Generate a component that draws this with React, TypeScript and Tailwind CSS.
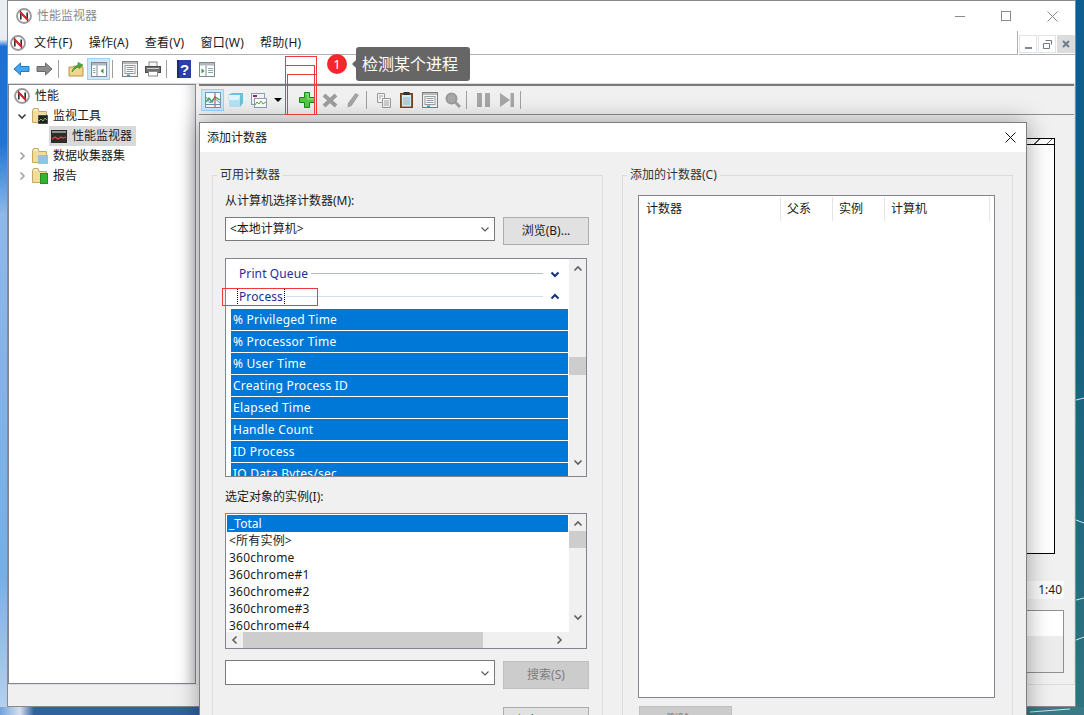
import type { ReactNode } from 'react';

const AppIcon = () => (
  <svg width="16" height="16" viewBox="0 0 16 16">
    <circle cx="8" cy="8" r="7" fill="#fff" stroke="#9a9a9a" strokeWidth="1.8" />
    <path d="M4.8 11.5V4.5L11.2 11.5V4.5" fill="none" stroke="#333" strokeWidth="1.7" />
    <path d="M4 4l8 8" stroke="#e0242c" strokeWidth="1.8" />
  </svg>
);

const Arrow = ({ dir, fill, stroke }: { dir: 'l' | 'r'; fill: string; stroke: string }) => (
  <svg width="17" height="14" viewBox="0 0 17 14">
    <path
      d={dir === 'l' ? 'M1 7l6.5-6v3.5H16v5H7.5V13z' : 'M16 7L9.5 1v3.5H1v5h8.5V13z'}
      fill={fill}
      stroke={stroke}
    />
  </svg>
);

const FolderUp = () => (
  <svg width="16" height="16" viewBox="0 0 16 16">
    <path d="M1 6h4l1-1h1l1 1h7v9H1z" fill="#efd68e" stroke="#b5954a" />
    <path d="M4 11c1-4 3-6 6-7V1.5L15 4l-4 3.5V5.8C8.500 6.500 6 8 4 11z" fill="#4fa83a" stroke="#2f7d22" strokeWidth=".6" />
  </svg>
);

const PaneIcon = ({ left }: { left?: boolean }) => (
  <svg width="16" height="15" viewBox="0 0 16 15">
    <rect x=".5" y=".5" width="15" height="14" fill="#fff" stroke="#7d8a96" />
    <rect x="1" y="1" width="14" height="2.500" fill="#aeb8c2" />
    <path d={left ? 'M6 3.500v11' : 'M7 3.500v11'} stroke="#7d8a96" />
    {left ? <path d="M12.500 6.500v5l-3-2.500z" fill="#2f9e3a" /> : <path d="M2.500 6.500v5l3-2.500z" fill="#2f9e3a" />}
    {left ? <path d="M2 6.500h2.500M2 8.500h2.500M2 10.500h2.500" stroke="#8aa" /> : <path d="M9 6.500h5M9 8.500h5M9 10.500h5" stroke="#8aa" />}
  </svg>
);

const PropsIcon = () => (
  <svg width="16" height="16" viewBox="0 0 16 16">
    <rect x=".5" y=".5" width="15" height="15" fill="#f4f4f4" stroke="#7f7f7f" />
    <rect x="1" y="1" width="14" height="2" fill="#b9b9b9" />
    <rect x="3" y="4.500" width="10" height="8" fill="#fff" stroke="#9a9a9a" />
    <path d="M4.500 6.500h7M4.500 8.500h7M4.500 10.500h7" stroke="#8b9aa8" />
    <rect x="5" y="13.500" width="3" height="1.500" fill="#2aa3dd" />
  </svg>
);

const PrintIcon = () => (
  <svg width="16" height="16" viewBox="0 0 16 16">
    <rect x="4" y="1" width="8" height="5" fill="#f6f6f6" stroke="#8a8a8a" />
    <rect x=".5" y="5.500" width="15" height="6" fill="#6f6f6f" stroke="#4a4a4a" />
    <rect x="2" y="7" width="12" height="1" fill="#d0d0d0" />
    <rect x="3.500" y="10.500" width="9" height="4.500" fill="#fff" stroke="#8a8a8a" />
  </svg>
);

const HelpIcon = () => (
  <svg width="14" height="18" viewBox="0 0 14 18">
    <rect width="14" height="18" fill="#2a3fa8" />
    <rect width="2" height="18" fill="#1c2a78" />
    <text x="7.500" y="14.500" textAnchor="middle" fontSize="15" fontWeight="700" fill="#fff" fontFamily="Liberation Sans">?</text>
  </svg>
);

const ChartIcon = () => (
  <svg width="16" height="16" viewBox="0 0 16 16">
    <rect x=".5" y=".5" width="15" height="15" fill="#f7fbff" stroke="#7d93ad" />
    <path d="M1 10l3-4 3 4 3-5 5 3" fill="none" stroke="#3f9e47" strokeWidth="1.300" />
    <path d="M1 5l4 6 4-5 6 5" fill="none" stroke="#5a8fc0" />
    <path d="M10 1v14" stroke="#d23a3a" />
    <path d="M1 12.500h14" stroke="#6b8db0" />
  </svg>
);

const CubeIcon = () => (
  <svg width="17" height="16" viewBox="0 0 17 16">
    <path d="M1 3l4-2h11v10l-3 4H3z" fill="#6fbfe3" />
    <path d="M1 3h12v12H3z" fill="#b5e3f5" />
    <path d="M1 3h12l-1 5H2z" fill="#dff4fb" />
  </svg>
);

const ReportChart = () => (
  <svg width="16" height="15" viewBox="0 0 16 15">
    <rect x=".5" y=".5" width="13" height="11" fill="#f1f3f6" stroke="#8e9db3" />
    <rect x="2" y="2" width="4" height="2" fill="#962a44" />
    <rect x="3.500" y="5.500" width="12" height="9" fill="#fbfdfb" stroke="#8e9db3" />
    <path d="M4 12l2-3 2 2 2-3 2 3 3-2" fill="none" stroke="#5aa24a" />
  </svg>
);

const Plus = () => (
  <svg width="16" height="16" viewBox="0 0 16 16">
    <path d="M5.500.5h5v5h5v5h-5v5h-5v-5h-5v-5h5z" fill="#56c742" stroke="#178a13" />
    <path d="M6.500 1.500h3v5h5v1h-6v-5h-2z" fill="#a4ea8c" />
  </svg>
);

const Cross = () => (
  <svg width="16" height="15" viewBox="0 0 16 15">
    <path d="M2 2l12 11M14 2L2 13" stroke="#9d9d9d" strokeWidth="4" />
  </svg>
);

const Pencil = () => (
  <svg width="14" height="16" viewBox="0 0 14 16">
    <path d="M9.500 1L13 3 5.500 14 1.500 15.500 2 11z" fill="#a4a4a4" />
  </svg>
);

const CopyIcon = () => (
  <svg width="14" height="15" viewBox="0 0 14 15">
    <path d="M.5.5h7v9h-7z" fill="#f2f2f2" stroke="#9a9a9a" />
    <path d="M5.500 5.500h8v9h-8z" fill="#f2f2f2" stroke="#9a9a9a" />
    <path d="M2 3h4M2 5h2M7 8h5M7 10h5M7 12h5" stroke="#a8a8a8" />
  </svg>
);

const PasteIcon = () => (
  <svg width="13" height="16" viewBox="0 0 13 16">
    <rect x=".5" y="1.500" width="12" height="14" fill="#8b5a35" stroke="#6d4322" />
    <rect x="2" y="3" width="9" height="11.500" fill="#d8ecf4" />
    <rect x="3.500" width="6" height="3" fill="#333" />
    <path d="M3 6h7M3 8h7M3 10h7M3 12h7" stroke="#8fb3c4" />
  </svg>
);

const ZoomIcon = () => (
  <svg width="16" height="16" viewBox="0 0 16 16">
    <circle cx="6.500" cy="6.500" r="5" fill="#a9a9a9" stroke="#9a9a9a" strokeWidth="2" />
    <path d="M10 10l5 5" stroke="#9f9f9f" strokeWidth="3" />
  </svg>
);

const PauseIcon = () => (
  <svg width="13" height="14" viewBox="0 0 13 14">
    <rect width="5" height="14" fill="#a6a6a6" />
    <rect x="8" width="5" height="14" fill="#a6a6a6" />
  </svg>
);

const NextIcon = () => (
  <svg width="14" height="14" viewBox="0 0 14 14">
    <path d="M0 0l10 7-10 7z" fill="#a6a6a6" />
    <rect x="10.500" width="3.500" height="14" fill="#a6a6a6" />
  </svg>
);

const Chevron = ({ dir, color = '#606060', w = 1.6 }: { dir: 'u' | 'd' | 'l' | 'r'; color?: string; w?: number }) => {
  const d = {
    u: 'M1.500 6.500L5 3l3.500 3.500',
    d: 'M1.500 3.500L5 7l3.500-3.500',
    l: 'M6.500 1.500L3 5l3.500 3.500',
    r: 'M3.500 1.500L7 5 3.500 8.500',
  }[dir];
  return (
    <svg width="10" height="10" viewBox="0 0 10 10">
      <path d={d} fill="none" stroke={color} strokeWidth={w} />
    </svg>
  );
};

const Folder = ({ children }: { children?: ReactNode }) => (
  <span className="relative flex h-4 w-4 shrink-0">
    <svg width="15" height="15" viewBox="0 0 15 15">
      <path d="M.5 2.500V14.500h14V3.500H7L6 .5H1.500z" fill="#f1dc9b" stroke="#c4a862" />
      <rect x="2" y="1.500" width="3.500" height="1" fill="#fff" />
    </svg>
    {children}
  </span>
);

const TreeRow = ({ pad, icon, label, chevron, selected }: { pad: string; icon: ReactNode; label: string; chevron?: 'd' | 'r'; selected?: boolean }) => (
  <div className={`flex h-5 items-center ${pad}`}>
    {chevron && (
      <span className="mr-[3px] flex w-[10px] justify-center">
        <Chevron dir={chevron} color={chevron === 'd' ? '#404040' : '#a0a0a0'} />
      </span>
    )}
    <span className={`flex h-5 items-center gap-[5px] pl-[2px] pr-[4px] ${selected ? 'bg-[#d9d9d9]' : ''}`}>
      {icon}
      <span>{label}</span>
    </span>
  </div>
);

const Btn = ({ children, on }: { children: ReactNode; on?: boolean }) => (
  <span className={`flex h-[22px] w-[23px] shrink-0 items-center justify-center ${on ? 'border border-[#99d1ff] bg-[#cce8ff]' : ''}`}>{children}</span>
);

const Sep = () => (
  <span className="flex h-[22px] w-[8px] shrink-0 pl-[2px] pt-[2px]">
    <span className="h-[18px] w-px bg-[#a0a0a0]" />
  </span>
);

const Combo = ({ text }: { text?: string }) => (
  <div className="flex h-full w-[270px] items-center justify-between border border-[#7a7a7a] bg-white pl-[4px] pr-[4px]">
    <span>{text}</span>
    <Chevron dir="d" color="#555" w={1.1} />
  </div>
);

const DlgButton = ({ children, off, cls }: { children?: ReactNode; off?: boolean; cls?: string }) => (
  <div className={`flex h-[28px] items-center justify-center border ${off ? 'border-[#bfbfbf] bg-[#cccccc] text-[#7c7c7c]' : 'border-[#adadad] bg-[#e1e1e1]'} ${cls ?? 'w-[86px]'}`}>{children}</div>
);

const counters = ['% Privileged Time', '% Processor Time', '% User Time', 'Creating Process ID', 'Elapsed Time', 'Handle Count', 'ID Process', 'IO Data Bytes/sec'];
const instances = ['<所有实例>', '360chrome', '360chrome#1', '360chrome#2', '360chrome#3', '360chrome#4'];

const ObjectRow = ({ name, open, lineCls }: { name: string; open?: boolean; lineCls: string }) => (
  <div className="flex h-[23px] items-center pl-[12px] pr-[8px] tracking-[0.1px] text-[#1f2d9c]">
    <span className="relative">
      {name}
      {open && <span className="absolute -inset-x-[2px] -inset-y-[1px] border border-dotted border-black" />}
    </span>
    <span className={`ml-[3px] mr-[7px] h-px flex-1 ${lineCls}`} />
    <Chevron dir={open ? 'u' : 'd'} color="#14307f" w={2} />
  </div>
);

export default function App() {
  return (
    <div className="relative h-[715px] w-[1084px] overflow-hidden [font-family:'Noto_Sans','Noto_Sans_CJK_SC',sans-serif] text-[12px] leading-4 text-[#1a1a1a]">
      {/* 桌面壁纸 */}
      <svg className="absolute inset-0" width="1084" height="715">
        <defs>
          <linearGradient id="lft" x1="0" y1="0" x2="0" y2="1">
            <stop offset="0" stopColor="#e9eef3" />
            <stop offset=".055" stopColor="#e9eef3" />
            <stop offset=".065" stopColor="#1a70d6" />
            <stop offset=".2" stopColor="#1f74d8" />
            <stop offset=".3" stopColor="#8db9e8" />
            <stop offset=".8" stopColor="#76aee6" />
            <stop offset="1" stopColor="#b9d2ee" />
          </linearGradient>
          <linearGradient id="rgt" x1="0" y1="0" x2="0" y2="1">
            <stop offset="0" stopColor="#0d5f93" />
            <stop offset=".4" stopColor="#125f80" />
            <stop offset="1" stopColor="#2f7480" />
          </linearGradient>
          <linearGradient id="bot" x1="0" y1="0" x2="1" y2="0">
            <stop offset="0" stopColor="#6fa3dc" />
            <stop offset=".1" stopColor="#d6dfec" />
            <stop offset=".17" stopColor="#2f62a0" />
          </linearGradient>
        </defs>
        <rect width="8" height="715" fill="url(#lft)" />
        <rect x="1076" width="8" height="715" fill="url(#rgt)" />
        <rect y="707" width="200" height="8" fill="url(#bot)" />
        <rect x="1026" y="707" width="58" height="8" fill="#3a7a86" />
        <path d="M1030 712l40-3M1076 600l8-2M1076 640l8-3M1076 520l8 3M1076 400l8-2" stroke="#cfe3e6" />
      </svg>

      {/* 性能监视器主窗口 */}
      <div className="absolute bottom-[8px] left-[7px] right-[8px] top-0 flex flex-col border border-[#8a8a8a] bg-[#f0f0f0]">
        <div className="flex h-[30px] shrink-0 items-center bg-white pl-[8px] text-[#8a8a8a]">
          <AppIcon />
          <span className="ml-[5px]">性能监视器</span>
          <span className="ml-auto flex h-full items-center">
            <span className="flex h-full w-[46px] items-center justify-center">
              <span className="h-px w-[10px] bg-[#8a8a8a]" />
            </span>
            <span className="flex h-full w-[46px] items-center justify-center">
              <span className="h-[10px] w-[10px] border border-[#8a8a8a]" />
            </span>
            <span className="flex h-full w-[46px] items-center justify-center">
              <svg width="11" height="11" viewBox="0 0 11 11"><path d="M.5.5l10 10M10.500.5l-10 10" stroke="#8a8a8a" /></svg>
            </span>
          </span>
        </div>

        <div className="flex h-[24px] shrink-0 bg-white">
          <div className="flex flex-1 items-center gap-[16px] border-b border-r border-[#b0b0b0] pl-[2px] tracking-[0.25px]">
            <span className="-mr-[8px]"><AppIcon /></span>
            <span>文件(F)</span>
            <span>操作(A)</span>
            <span>查看(V)</span>
            <span>窗口(W)</span>
            <span>帮助(H)</span>
          </div>
          <div className="ml-[1px] flex w-[56px] items-center gap-[1px] border-b border-[#b0b0b0] pt-[3px]">
            <span className="flex h-[18px] w-[18px] items-end justify-center border border-[#e3e3e3] pb-[3px]"><span className="h-[2px] w-[7px] bg-[#7b8a9a]" /></span>
            <span className="flex h-[18px] w-[18px] items-center justify-center border border-[#e3e3e3]">
              <svg width="9" height="9" viewBox="0 0 9 9"><path d="M2.500.5h6v4M.5 3.500h6v5h-6z" fill="none" stroke="#6d7b8a" /></svg>
            </span>
            <span className="flex h-[18px] w-[18px] items-center justify-center bg-[#dcdcdc]">
              <svg width="8" height="8" viewBox="0 0 8 8"><path d="M1 1l6 6M7 1L1 7" stroke="#6d7b8a" strokeWidth="2" /></svg>
            </span>
          </div>
        </div>

        <div className="flex h-[29px] shrink-0 items-center border-b border-[#d9d9d9] bg-white pl-[2px]">
          <Btn><Arrow dir="l" fill="#45a5ee" stroke="#1d7cc8" /></Btn>
          <Btn><Arrow dir="r" fill="#8c8c8c" stroke="#6a6a6a" /></Btn>
          <Sep />
          <Btn><FolderUp /></Btn>
          <Btn on><PaneIcon left /></Btn>
          <Sep />
          <Btn><PropsIcon /></Btn>
          <Btn><PrintIcon /></Btn>
          <Sep />
          <Btn><HelpIcon /></Btn>
          <Btn><PaneIcon /></Btn>
        </div>

        <div className="flex min-h-0 flex-1 gap-[3px]">
          <div className="w-[188px] shrink-0 border border-[#828790] bg-white pt-[1px] shadow-[inset_-14px_0_14px_-12px_rgba(0,0,0,0.25)]">
            <TreeRow pad="pl-[3px]" icon={<AppIcon />} label="性能" />
            <TreeRow
              pad="pl-[8px]"
              chevron="d"
              icon={
                <Folder>
                  <svg className="absolute bottom-0 right-0" width="10" height="9" viewBox="0 0 10 9">
                    <rect width="10" height="9" fill="#222" stroke="#777" />
                    <path d="M1 6l2-2 2 2 2-3 2 2" fill="none" stroke="#5fd05f" />
                  </svg>
                </Folder>
              }
              label="监视工具"
            />
            <TreeRow
              pad="pl-[40px]"
              selected
              icon={
                <svg width="16" height="13" viewBox="0 0 16 13">
                  <rect width="16" height="13" fill="#2c2c2c" />
                  <rect x="1" y="1" width="14" height="2" fill="#8f8f8f" />
                  <path d="M1 9l3-2 3 2 3-2 2 1 3-1" fill="none" stroke="#e8473f" strokeWidth="1.200" />
                </svg>
              }
              label="性能监视器"
            />
            <TreeRow pad="pl-[8px]" chevron="r" icon={<Folder><span className="absolute bottom-0 right-0 h-[9px] w-[10px] bg-[#8fc4e4]" /></Folder>} label="数据收集器集" />
            <TreeRow pad="pl-[8px]" chevron="r" icon={<Folder><span className="absolute bottom-0 right-0 h-[11px] w-[8px] border border-[#2d8a2d] bg-[#2fb52f]" /></Folder>} label="报告" />
          </div>

          <div className="flex min-w-0 flex-1 flex-col border-r border-[#e0e0e0]">
            <div className="flex h-[31px] shrink-0 items-center border-b border-t-2 border-[#8f8f8f] border-t-[#7a7a7a] pl-[2px]">
              <Btn on><ChartIcon /></Btn>
              <Btn><CubeIcon /></Btn>
              <Btn><ReportChart /></Btn>
              <span className="flex w-[15px] justify-center">
                <span className="h-0 w-0 border-x-[4px] border-t-[4px] border-x-transparent border-t-black" />
              </span>
              <Sep />
              <span className="w-[2px]" />
              <Btn><Plus /></Btn>
              <Btn><Cross /></Btn>
              <Btn><Pencil /></Btn>
              <Sep />
              <Btn><CopyIcon /></Btn>
              <Btn><PasteIcon /></Btn>
              <Btn><PropsIcon /></Btn>
              <Btn><ZoomIcon /></Btn>
              <Sep />
              <Btn><PauseIcon /></Btn>
              <Btn><NextIcon /></Btn>
              <Sep />
            </div>
            <div className="flex min-h-0 flex-1 flex-col pr-[10px] pt-[23px]">
              <div className="mr-[9px] h-[416px] shrink-0 border border-black bg-white">
                <div className="h-[6px] border-b border-black bg-[repeating-linear-gradient(135deg,#fff_0,#fff_8px,#555_8px,#555_9px)]" />
              </div>
              <div className="mt-[27px] flex h-[18px] shrink-0 items-center justify-end bg-[#fafafa] pr-[2px]">1:40</div>
              <div className="mt-[11px] h-[63px] shrink-0 border border-[#8f8f8f] bg-[#ececec]">
                <div className="h-[25px] bg-white" />
              </div>
            </div>
          </div>
        </div>

        <div className="h-[22px] shrink-0 border-t border-[#dcdcdc] bg-[#f0f0f0]" />
      </div>

      {/* 添加计数器对话框 */}
      <div className="absolute left-[199px] top-[122px] h-[640px] w-[828px] border border-[#7f7f7f] bg-[#f0f0f0] shadow-[0_0_22px_rgba(0,0,0,0.35)]">
        <div className="flex h-[29px] items-center justify-between bg-white pl-[7px] pr-[10px]">
          <span>添加计数器</span>
          <svg width="11" height="11" viewBox="0 0 11 11"><path d="M.5.5l10 10M10.500.5l-10 10" stroke="#111" /></svg>
        </div>
        <div className="flex gap-[19px] pl-[12px] pt-[15px]">
          <fieldset className="h-[600px] w-[391px] border border-[#dcdcdc] pl-[12px]">
            <legend className="ml-[-8px] px-[3px] text-[#333]">可用计数器</legend>
            <div className="mt-[10px]">从计算机选择计数器(M):</div>
            <div className="mt-[8px] flex h-[28px] gap-[8px]">
              <div className="h-[24px]"><Combo text="<本地计算机>" /></div>
              <DlgButton>浏览(B)...</DlgButton>
            </div>
            <div className="mt-[13px] flex h-[219px] w-[362px] border border-[#82858c] bg-white">
              <div className="min-w-0 flex-1 overflow-hidden pl-[1px] pr-[1px] pt-[3px]">
                <ObjectRow name="Print Queue" lineCls="bg-[#b4bbd4]" />
                <ObjectRow name="Process" open lineCls="bg-[#d5dbea]" />
                <div className="mt-[1px] pl-[4px]">
                  {counters.map(c => (
                    <div key={c} className="mb-px flex h-[21px] items-center bg-[#0078d7] pl-[2px] tracking-[0.25px] text-white">{c}</div>
                  ))}
                </div>
              </div>
              <div className="flex w-[17px] shrink-0 flex-col items-center bg-[#f0f0f0]">
                <span className="mt-[5px]"><Chevron dir="u" /></span>
                <span className="mt-[83px] h-[18px] w-full bg-[#cdcdcd]" />
                <span className="mt-[82px]"><Chevron dir="d" /></span>
              </div>
            </div>
            <div className="mt-[12px]">选定对象的实例(I):</div>
            <div className="mt-[8px] flex h-[136px] w-[362px] flex-col border border-[#82858c] bg-white">
              <div className="flex min-h-0 flex-1">
                <div className="min-w-0 flex-1 overflow-hidden pl-[1px] pr-[1px] pt-[1px]">
                  <div className="flex h-[17px] items-center bg-[#0078d7] pl-[2px] text-white">_Total</div>
                  {instances.map(i => (
                    <div key={i} className="flex h-[17px] items-center pl-[2px] tracking-[0.2px]">{i}</div>
                  ))}
                </div>
                <div className="flex w-[17px] shrink-0 flex-col items-center bg-[#f0f0f0]">
                  <span className="mt-[5px]"><Chevron dir="u" /></span>
                  <span className="mt-[2px] h-[17px] w-full bg-[#cdcdcd]" />
                  <span className="mt-[64px]"><Chevron dir="d" /></span>
                </div>
              </div>
              <div className="flex h-[16px] shrink-0 items-center bg-[#f0f0f0]">
                <span className="ml-[4px]"><Chevron dir="l" /></span>
                <span className="ml-[3px] h-[16px] w-[240px] bg-[#cdcdcd]" />
                <span className="ml-[71px]"><Chevron dir="r" /></span>
              </div>
            </div>
            <div className="mt-[11px] flex gap-[8px]">
              <div className="h-[25px]"><Combo /></div>
              <div className="mt-[1px]"><DlgButton off>搜索(S)</DlgButton></div>
            </div>
            <div className="ml-[278px] mt-[18px]"><DlgButton>添加(D) &gt;&gt;</DlgButton></div>
          </fieldset>

          <fieldset className="h-[600px] w-[391px] border border-[#dcdcdc] pl-[15px]">
            <legend className="ml-[-11px] px-[3px] text-[#333]">添加的计数器(C)</legend>
            <div className="mt-[12px] h-[503px] w-[357px] border border-[#82858c] bg-white">
              <div className="flex h-[25px] pt-[1px]">
                <span className="flex w-[142px] items-center border-r border-[#e5e5e5] pl-[7px]">计数器</span>
                <span className="flex w-[52px] items-center border-r border-[#e5e5e5] pl-[6px]">父系</span>
                <span className="flex w-[52px] items-center border-r border-[#e5e5e5] pl-[6px]">实例</span>
                <span className="flex w-[105px] items-center border-r border-[#e5e5e5] pl-[6px]">计算机</span>
              </div>
            </div>
            <div className="mt-[8px]"><DlgButton off cls="w-[93px] ml-[1px]">删除(R)</DlgButton></div>
          </fieldset>
        </div>
      </div>

      {/* 教程标注 */}
      <span className="absolute left-[285px] top-[56px] h-[59px] w-[32px] border border-[#f0393c]" />
      <span className="absolute left-[285px] top-[65px] h-[50px] w-[30px] border border-[#f0393c]" />
      <span className="absolute left-[287px] top-[74px] h-[41px] w-[30px] border border-[#f0393c]" />
      <span className="absolute left-[222px] top-[288px] h-[18px] w-[96px] border border-[#f0393c]" />
      <span className="absolute left-[327px] top-[54px] flex h-[20px] w-[20px] items-center justify-center rounded-full bg-[#f5272d] text-[13px] text-white">1</span>
      <div className="absolute left-[356px] top-[47px] flex h-[34px] w-[114px] items-center rounded-[3px] bg-[#666666] pl-[6px] text-[16px] text-white">
        <span className="absolute -left-[4px] top-[13px] h-0 w-0 border-y-[4px] border-r-[4px] border-y-transparent border-r-[#666666]" />
        检测某个进程
      </div>
    </div>
  );
}
